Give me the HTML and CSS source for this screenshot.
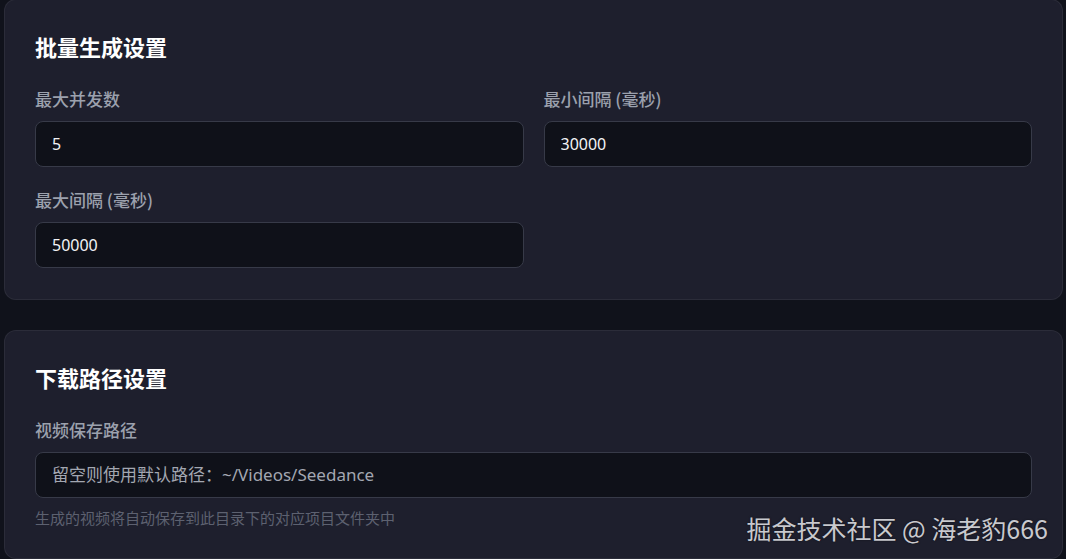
FILE: index.html
```html
<!DOCTYPE html>
<html lang="zh-CN">
<head>
<meta charset="utf-8">
<title>设置</title>
<link rel="stylesheet" href="styles.css">
</head>
<body>
<main class="page">
  <section class="card card-first">
    <h2 class="card-title">批量生成设置</h2>
    <div class="grid">
      <div class="field">
        <label class="label">最大并发数</label>
        <input class="input" type="text" value="5">
      </div>
      <div class="field">
        <label class="label">最小间隔 (毫秒)</label>
        <input class="input" type="text" value="30000">
      </div>
      <div class="field">
        <label class="label">最大间隔 (毫秒)</label>
        <input class="input" type="text" value="50000">
      </div>
    </div>
  </section>
  <section class="card">
    <h2 class="card-title">下载路径设置</h2>
    <div class="field">
      <label class="label">视频保存路径</label>
      <input class="input" type="text" placeholder="留空则使用默认路径：~/Videos/Seedance">
      <p class="hint">生成的视频将自动保存到此目录下的对应项目文件夹中</p>
    </div>
  </section>
  <div class="watermark">掘金技术社区 @ 海老豹666</div>
</main>
</body>
</html>
```
FILE: styles.css
```css
* { box-sizing: border-box; }
html, body { margin: 0; padding: 0; }
body {
  background: #10121b;
  font-family: "Noto Sans", "Noto Sans CJK SC", sans-serif;
  color: #e5e7eb;
  height: 559px;
  overflow: hidden;
}
.page {
  position: relative;
  height: 559px;
  padding: 0 3px 0 4px;
  display: flex;
  flex-direction: column;
  gap: 30px;
}
.card {
  background: #1e1f2d;
  border: 1px solid rgba(255,255,255,0.06);
  border-radius: 12px;
  padding: 31px 30px 30px;
}
.card-first {
  margin-top: -1px;
  padding-bottom: 31px;
}
.card-title {
  margin: 0 0 26px;
  font-family: "Noto Sans CJK SC", sans-serif;
  font-size: 22px;
  line-height: 30px;
  font-weight: 700;
  color: #ffffff;
}
.grid {
  display: grid;
  grid-template-columns: 1fr 1fr;
  column-gap: 20px;
  row-gap: 21px;
}
.field { display: flex; flex-direction: column; }
.label {
  font-family: "Noto Sans CJK SC", sans-serif;
  font-size: 17px;
  line-height: 24px;
  font-weight: 500;
  color: #9ca1ad;
  margin-bottom: 10px;
}
.input {
  height: 46px;
  width: 100%;
  background: #0f1119;
  border: 1px solid #373a48;
  border-radius: 8px;
  padding: 0 16px;
  font-family: "Noto Sans", "Noto Sans CJK SC", sans-serif;
  font-size: 16px;
  color: #f3f4f6;
  outline: none;
}
.input::placeholder {
  color: #a3a7b1;
  opacity: 1;
  font-size: 17px;
}
.hint {
  margin: 10px 0 0;
  font-family: "Noto Sans CJK SC", sans-serif;
  font-size: 15px;
  line-height: 20px;
  color: #5d6170;
}
.watermark {
  position: absolute;
  right: 18px;
  bottom: 14px;
  font-family: "Noto Sans CJK SC", sans-serif;
  font-size: 25px;
  line-height: 34px;
  color: rgba(235,236,240,0.85);
  text-shadow: 0 0 2px rgba(0,0,0,0.5);
}
```
